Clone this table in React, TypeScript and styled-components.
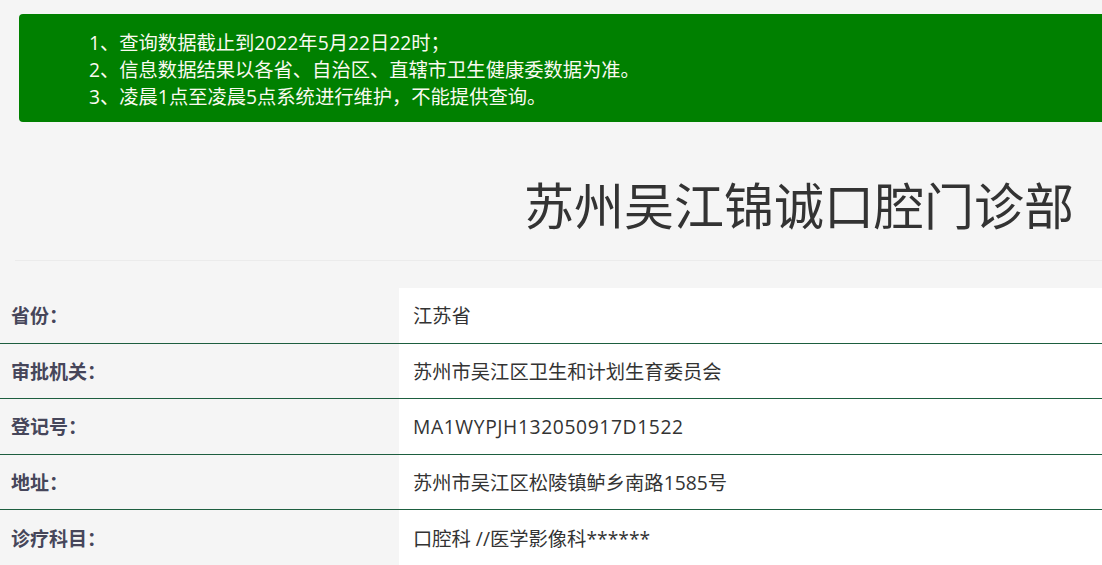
import React from "react";
import styled, { createGlobalStyle } from "styled-components";

const Global = createGlobalStyle`
  html, body { margin: 0; padding: 0; background: #f5f5f5; }
  body { font-family: "Open Sans", "Noto Sans CJK SC", "Noto Sans", sans-serif; overflow: hidden; }
`;

const Page = styled.div`
  width: 1102px;
  height: 565px;
  overflow: hidden;
  background: #f5f5f5;
`;

const Notice = styled.ul`
  list-style: none;
  margin: 14px -20px 0 19px;
  padding: 15px 0 12px 70px;
  background: #008000;
  border-radius: 4px;
  color: #fafaf0;
  font-size: 19.3px;
  line-height: 27px;
`;

const NoticeItem = styled.li`
  margin: 0;
  white-space: nowrap;
`;

const Title = styled.h1`
  margin: 0;
  height: 138px;
  display: flex;
  align-items: center;
  justify-content: flex-end;
  padding: 24px 28px 0 0;
  box-sizing: border-box;
  font-family: "Noto Sans CJK SC", sans-serif;
  font-size: 50px;
  font-weight: normal;
  color: #333;
`;

const Divider = styled.hr`
  margin: 0 0 0 15px;
  border: 0;
  border-top: 1px solid #ebebeb;
`;

const Table = styled.div`
  margin-top: 27px;
  display: flex;
  flex-direction: column;
`;

const Row = styled.div<{ $last?: boolean }>`
  display: grid;
  grid-template-columns: 399px 1fr;
  height: 55.6px;
  box-sizing: border-box;
  border-bottom: ${(p) => (p.$last ? "none" : "1px solid #1d5e3f")};
`;

const Label = styled.div`
  display: flex;
  align-items: center;
  padding-left: 11px;
  font-size: 19px;
  font-weight: bold;
  color: #46465a;
`;

const Value = styled.div<{ $code?: boolean }>`
  display: flex;
  align-items: center;
  padding-left: 14px;
  background: #fff;
  font-size: 19.3px;
  color: #333;
  letter-spacing: ${(p) => (p.$code ? "0.6px" : "0")};
`;

const notices = [
  "1、查询数据截止到2022年5月22日22时；",
  "2、信息数据结果以各省、自治区、直辖市卫生健康委数据为准。",
  "3、凌晨1点至凌晨5点系统进行维护，不能提供查询。",
];

const rows: [string, string, boolean][] = [
  ["省份：", "江苏省", false],
  ["审批机关：", "苏州市吴江区卫生和计划生育委员会", false],
  ["登记号：", "MA1WYPJH132050917D1522", true],
  ["地址：", "苏州市吴江区松陵镇鲈乡南路1585号", false],
  ["诊疗科目：", "口腔科 //医学影像科******", false],
];

export default function App() {
  return (
    <Page>
      <Global />
      <Notice>
        {notices.map((n) => (
          <NoticeItem key={n}>{n}</NoticeItem>
        ))}
      </Notice>
      <Title>苏州吴江锦诚口腔门诊部</Title>
      <Divider />
      <Table>
        {rows.map(([k, v, code], i) => (
          <Row key={k} $last={i === rows.length - 1}>
            <Label>{k}</Label>
            <Value $code={code}>{v}</Value>
          </Row>
        ))}
      </Table>
    </Page>
  );
}
